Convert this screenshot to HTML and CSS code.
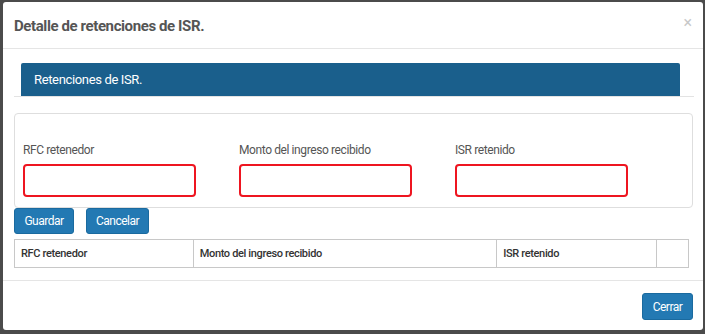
FILE: index.html
```html
<!DOCTYPE html>
<html lang="es">
<head>
<meta charset="utf-8">
<link rel="stylesheet" href="styles.css">
</head>
<body>
<div class="modal">
  <div class="modal-header">
    <h4 class="modal-title">Detalle de retenciones de ISR.</h4>
    <span class="close">&times;</span>
  </div>
  <div class="modal-body">
    <div class="heading-wrap">
      <div class="panel-heading">Retenciones de ISR.</div>
    </div>
    <div class="form-panel">
      <div class="field">
        <label>RFC retenedor</label>
        <div class="input"></div>
      </div>
      <div class="field">
        <label>Monto del ingreso recibido</label>
        <div class="input"></div>
      </div>
      <div class="field">
        <label>ISR retenido</label>
        <div class="input"></div>
      </div>
    </div>
    <div class="actions">
      <button class="btn btn-guardar">Guardar</button>
      <button class="btn btn-cancelar">Cancelar</button>
    </div>
    <table class="grid">
      <tr>
        <th class="c1">RFC retenedor</th>
        <th class="c2">Monto del ingreso recibido</th>
        <th class="c3">ISR retenido</th>
        <th class="c4"></th>
      </tr>
    </table>
  </div>
  <div class="modal-footer">
    <button class="btn btn-cerrar">Cerrar</button>
  </div>
</div>
</body>
</html>
```

FILE: styles.css
```css
html, body {
  margin: 0;
  padding: 0;
}
body {
  background: #4b4b4b;
  width: 705px;
  height: 334px;
  overflow: hidden;
  font-family: Roboto, "Liberation Sans", sans-serif;
  padding-top: 2px;
  box-sizing: border-box;
}
.modal {
  margin-left: 3px;
  width: 700px;
  height: 328px;
  background: #fff;
  border-radius: 3px;
  box-sizing: border-box;
  position: relative;
}
.modal-header {
  height: 47px;
  border-bottom: 1px solid #e5e5e5;
  box-sizing: border-box;
  padding: 15px 11px 13px;
  display: flex;
  align-items: center;
  justify-content: space-between;
}
.modal-title {
  margin: 0;
  font-size: 15px;
  letter-spacing: -0.4px;
  font-weight: 700;
  color: #555;
  line-height: 18px;
}
.close {
  color: #c8c8c8;
  font-size: 16px;
  line-height: 16px;
  margin-top: -6px;
}
.modal-body {
  padding: 14px 10px 12px 11px;
}
.heading-wrap {
  border-bottom: 1px solid #e3e3e3;
  width: 680px;
}
.panel-heading {
  margin-left: 7px;
  width: 659px;
  height: 33px;
  background: #1a5f8c;
  color: #fff;
  font-size: 13px;
  letter-spacing: -0.35px;
  line-height: 33px;
  padding-left: 13px;
  box-sizing: border-box;
  border-radius: 2px 2px 0 0;
}
.form-panel {
  margin-top: 16px;
  width: 679px;
  height: 95px;
  border: 1px solid #dedede;
  border-radius: 4px;
  box-sizing: border-box;
  padding: 29px 8px 0;
  display: flex;
}
.field {
  width: 216px;
  display: flex;
  flex-direction: column;
}
.field label {
  font-size: 12px;
  letter-spacing: -0.4px;
  color: #555;
  line-height: 14px;
  height: 21px;
}
.input {
  width: 173px;
  height: 33px;
  border: 2px solid #ee1520;
  border-radius: 4px;
  box-sizing: border-box;
}
.actions {
  display: flex;
  gap: 12px;
}
.btn {
  border: 1px solid #1a6a9f;
  background: #2379b3;
  color: #fff;
  font-family: Roboto, "Liberation Sans", sans-serif;
  font-size: 12px;
  letter-spacing: -0.5px;
  border-radius: 3px;
  padding: 0;
  height: 26px;
  box-sizing: border-box;
}
.btn-guardar { width: 60px; }
.btn-cancelar { width: 63px; }
.grid {
  margin-top: 5px;
  width: 675px;
  border-collapse: collapse;
}
.grid th {
  border: 1px solid #c8c8c8;
  height: 28px;
  box-sizing: border-box;
  text-align: left;
  font-size: 11px;
  letter-spacing: -0.35px;
  font-weight: 500;
  color: #333;
  padding: 0 0 0 6px;
}
.c1 { width: 179px; }
.c2 { width: 304px; }
.c3 { width: 160px; }
.c4 { width: 32px; }
.modal-footer {
  border-top: 1px solid #e5e5e5;
  padding: 12px 10px 0 0;
  display: flex;
  justify-content: flex-end;
}
.btn-cerrar {
  width: 51px;
  height: 27px;
}
```
